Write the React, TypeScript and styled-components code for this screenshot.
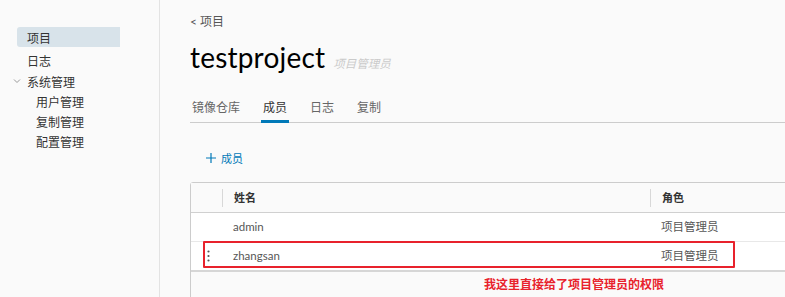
import styled, { createGlobalStyle } from "styled-components"

const GlobalStyle = createGlobalStyle`
  html, body {
    margin: 0;
    padding: 0;
    background: #fafafa;
    font-family: Lato, "Noto Sans CJK SC", sans-serif;
    color: #333;
  }
`

const Layout = styled.div`
  display: flex;
  height: 297px;
  overflow: hidden;
`

const Sidebar = styled.nav`
  width: 160px;
  flex-shrink: 0;
  border-right: 1px solid #e3e3e3;
  padding-top: 27px;
  box-sizing: border-box;
`

const NavItem = styled.div<{ $active?: boolean; $sub?: boolean; $tall?: boolean }>`
  display: flex;
  align-items: center;
  height: ${(p) => (p.$tall ? "22px" : "20px")};
  margin-left: 17px;
  margin-bottom: ${(p) => (p.$active ? "2px" : "0")};
  width: 103px;
  padding-left: ${(p) => (p.$sub ? "19px" : "10px")};
  box-sizing: border-box;
  font-size: 12px;
  color: #333;
  background: ${(p) => (p.$active ? "#d8e3ea" : "transparent")};
  border-radius: 3px 0 0 3px;
  position: relative;
`

const Chevron = styled.svg`
  position: absolute;
  left: -4px;
  top: 7px;
`

const Main = styled.main`
  flex: 1;
  padding: 13px 0 0 30px;
  min-width: 0;
  overflow: hidden;
`

const BackLink = styled.div`
  font-size: 12px;
  color: #565656;
  line-height: 18px;
`

const TitleRow = styled.div`
  display: flex;
  align-items: baseline;
  gap: 8px;
  margin-top: 9px;
  height: 40px;
`

const Title = styled.h1`
  margin: 0;
  font-family: Lato, sans-serif;
  font-weight: 400;
  font-size: 28px;
  color: #000;
  letter-spacing: 0.2px;
`

const RoleHint = styled.span`
  font-size: 11.5px;
  font-style: italic;
  color: #cacaca;
`

const Tabs = styled.div`
  display: flex;
  gap: 19px;
  margin-top: 16px;
  border-bottom: 1px solid #cccccc;
`

const Tab = styled.div<{ $active?: boolean }>`
  padding: 0 2px;
  height: 24px;
  line-height: 24px;
  font-size: 12px;
  color: ${(p) => (p.$active ? "#333" : "#666")};
  border-bottom: 3px solid ${(p) => (p.$active ? "#0079b8" : "transparent")};
  margin-bottom: -1px;
`

const AddButton = styled.div`
  display: flex;
  align-items: center;
  gap: 5px;
  margin: 26px 0 0 16px;
  height: 18px;
  font-size: 11px;
  color: #0079b8;
`

const Table = styled.div`
  position: relative;
  margin-top: 15px;
  width: 640px;
  height: 200px;
  border: 1px solid #cccccc;
  border-radius: 3px;
  background: #fafafa;
`

const Row = styled.div<{ $head?: boolean; $last?: boolean }>`
  display: grid;
  grid-template-columns: 31px 428px 1fr;
  align-items: center;
  height: 28px;
  height: ${(p) => (p.$head ? "29px" : "28px")};
  background: ${(p) => (p.$head ? "#fafafa" : "#fff")};
  border-bottom: ${(p) =>
    p.$head ? "1px solid #d0d0d0" : p.$last ? "2px solid #d6d6d6" : "1px solid #e8e8e8"};
  font-size: ${(p) => (p.$head ? "11px" : "11.5px")};
  font-weight: ${(p) => (p.$head ? 600 : 400)};
  color: ${(p) => (p.$head ? "#333" : "#565656")};
`

const Cell = styled.div<{ $divider?: boolean }>`
  padding-left: 11px;
  height: 18px;
  line-height: 18px;
  border-left: ${(p) => (p.$divider ? "1px solid #d8d8d8" : "none")};
  white-space: nowrap;
`

const ActionCell = styled.div`
  display: flex;
  justify-content: center;
  padding-left: 3px;
`

const Annotation = styled.div`
  position: absolute;
  left: 12px;
  top: 58px;
  width: 528px;
  height: 23px;
  border: 2px solid #e8222c;
  border-radius: 1px;
  pointer-events: none;
`

const Caption = styled.div`
  position: absolute;
  left: 293px;
  top: 92px;
  font-size: 12px;
  font-weight: 700;
  color: #e8222c;
  white-space: nowrap;
`

const members = [
  { name: "admin", role: "项目管理员" },
  { name: "zhangsan", role: "项目管理员" },
]

function Dots() {
  return (
    <svg width="3" height="12" viewBox="0 0 3 12">
      <circle cx="1.5" cy="1.5" r="1.1" fill="#565656" />
      <circle cx="1.5" cy="6" r="1.1" fill="#565656" />
      <circle cx="1.5" cy="10.5" r="1.1" fill="#565656" />
    </svg>
  )
}

export default function App() {
  return (
    <>
      <GlobalStyle />
      <Layout>
        <Sidebar>
          <NavItem $active>项目</NavItem>
          <NavItem $tall>日志</NavItem>
          <NavItem>
            <Chevron width="8" height="6" viewBox="0 0 8 6">
              <path d="M1 1.5 L4 4.5 L7 1.5" fill="none" stroke="#999" strokeWidth="1" />
            </Chevron>
            系统管理
          </NavItem>
          <NavItem $sub>用户管理</NavItem>
          <NavItem $sub>复制管理</NavItem>
          <NavItem $sub>配置管理</NavItem>
        </Sidebar>
        <Main>
          <BackLink>&lt; 项目</BackLink>
          <TitleRow>
            <Title>testproject</Title>
            <RoleHint>项目管理员</RoleHint>
          </TitleRow>
          <Tabs>
            <Tab>镜像仓库</Tab>
            <Tab $active>成员</Tab>
            <Tab>日志</Tab>
            <Tab>复制</Tab>
          </Tabs>
          <AddButton>
            <svg width="10" height="10" viewBox="0 0 10 10">
              <path d="M5 0 V10 M0 5 H10" stroke="#0079b8" strokeWidth="1.2" />
            </svg>
            成员
          </AddButton>
          <Table>
            <Row $head>
              <ActionCell />
              <Cell $divider>姓名</Cell>
              <Cell $divider>角色</Cell>
            </Row>
            {members.map((m, i) => (
              <Row key={m.name} $last={i === members.length - 1}>
                <ActionCell>{i === 1 && <Dots />}</ActionCell>
                <Cell>{m.name}</Cell>
                <Cell>{m.role}</Cell>
              </Row>
            ))}
            <Annotation />
            <Caption>我这里直接给了项目管理员的权限</Caption>
          </Table>
        </Main>
      </Layout>
    </>
  )
}
